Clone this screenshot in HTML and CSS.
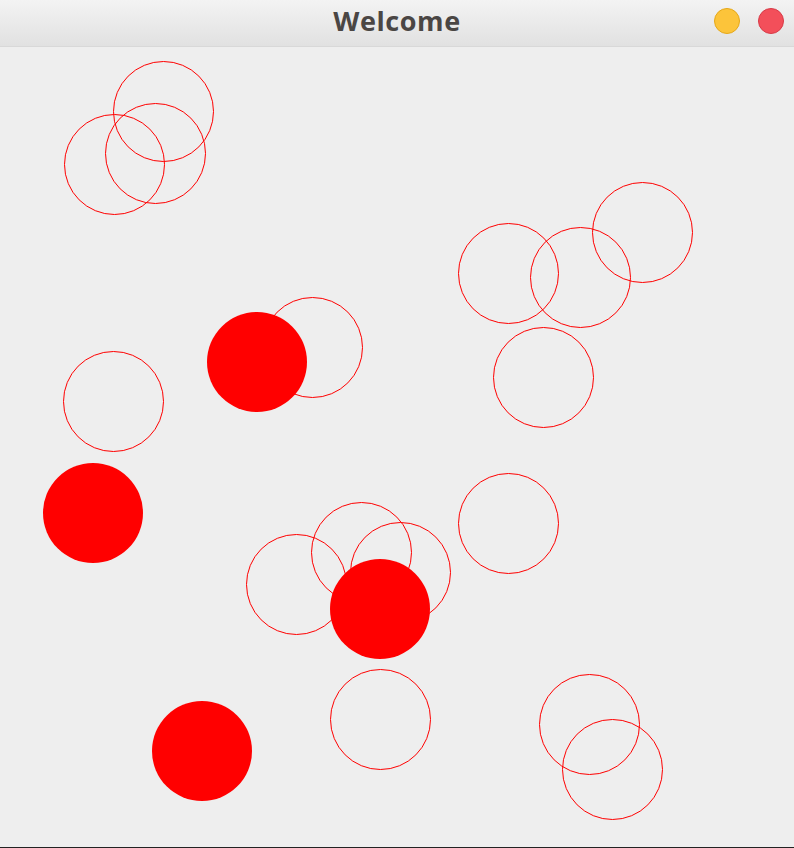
FILE: index.html
```html
<!DOCTYPE html>
<html lang="en">
<head>
<meta charset="utf-8">
<title>Welcome</title>
<link rel="stylesheet" href="styles.css">
</head>
<body>
<div class="window">
  <header class="titlebar">
    <div class="title">Welcome</div>
    <div class="controls">
      <span class="btn btn-min"></span>
      <span class="btn btn-close"></span>
    </div>
  </header>
  <main class="canvas">
    <svg class="drawing" width="794" height="800" viewBox="0 47 794 800" xmlns="http://www.w3.org/2000/svg">
      <g class="rings">
        <circle cx="163.5" cy="111.5" r="50"/>
        <circle cx="114.5" cy="164.5" r="50"/>
        <circle cx="155.5" cy="153.5" r="50"/>
        <circle cx="642.5" cy="232.5" r="50"/>
        <circle cx="508.5" cy="273.5" r="50"/>
        <circle cx="580.5" cy="277.5" r="50"/>
        <circle cx="543.5" cy="377.5" r="50"/>
        <circle cx="312.5" cy="347.5" r="50"/>
        <circle cx="113.5" cy="401.5" r="50"/>
        <circle cx="508.5" cy="523.5" r="50"/>
        <circle cx="361.5" cy="552.5" r="50"/>
        <circle cx="400.5" cy="572.5" r="50"/>
        <circle cx="296.5" cy="584.5" r="50"/>
        <circle cx="380.5" cy="719.5" r="50"/>
        <circle cx="589.5" cy="724.5" r="50"/>
        <circle cx="612.5" cy="769.5" r="50"/>
      </g>
      <g class="dots">
        <circle cx="257" cy="362" r="50"/>
        <circle cx="93" cy="513" r="50"/>
        <circle cx="380" cy="609" r="50"/>
        <circle cx="202" cy="751" r="50"/>
      </g>
    </svg>
  </main>
</div>
</body>
</html>
```
FILE: styles.css
```css
html, body {
  margin: 0;
  padding: 0;
  background: #eeeeee;
}

.window {
  width: 794px;
  height: 848px;
  display: flex;
  flex-direction: column;
  overflow: hidden;
}

.titlebar {
  position: relative;
  height: 46px;
  flex: none;
  display: flex;
  align-items: center;
  justify-content: center;
  background: linear-gradient(#f3f3f3, #e1e1e1);
  border-bottom: 1px solid #d8d8d8;
}

.title {
  font-family: "Open Sans", "DejaVu Sans", sans-serif;
  font-weight: 700;
  font-size: 27px;
  color: #4a4644;
  letter-spacing: 0.6px;
  margin-top: -5px;
}

.controls {
  position: absolute;
  right: 10px;
  top: 8px;
  display: flex;
  gap: 18px;
}

.btn {
  display: block;
  width: 24px;
  height: 24px;
  border-radius: 50%;
}

.btn-min {
  background: #fcc43a;
  border: 1px solid #e6a817;
}

.btn-close {
  background: #f34f5a;
  border: 1px solid #d83a47;
}

.canvas {
  height: 800px;
  flex: none;
  background: #eeeeee;
  border-bottom: 1px solid #222222;
}

.drawing {
  display: block;
}

.rings circle {
  fill: none;
  stroke: #ff0000;
  stroke-width: 1;
}

.dots circle {
  fill: #ff0000;
}
```
